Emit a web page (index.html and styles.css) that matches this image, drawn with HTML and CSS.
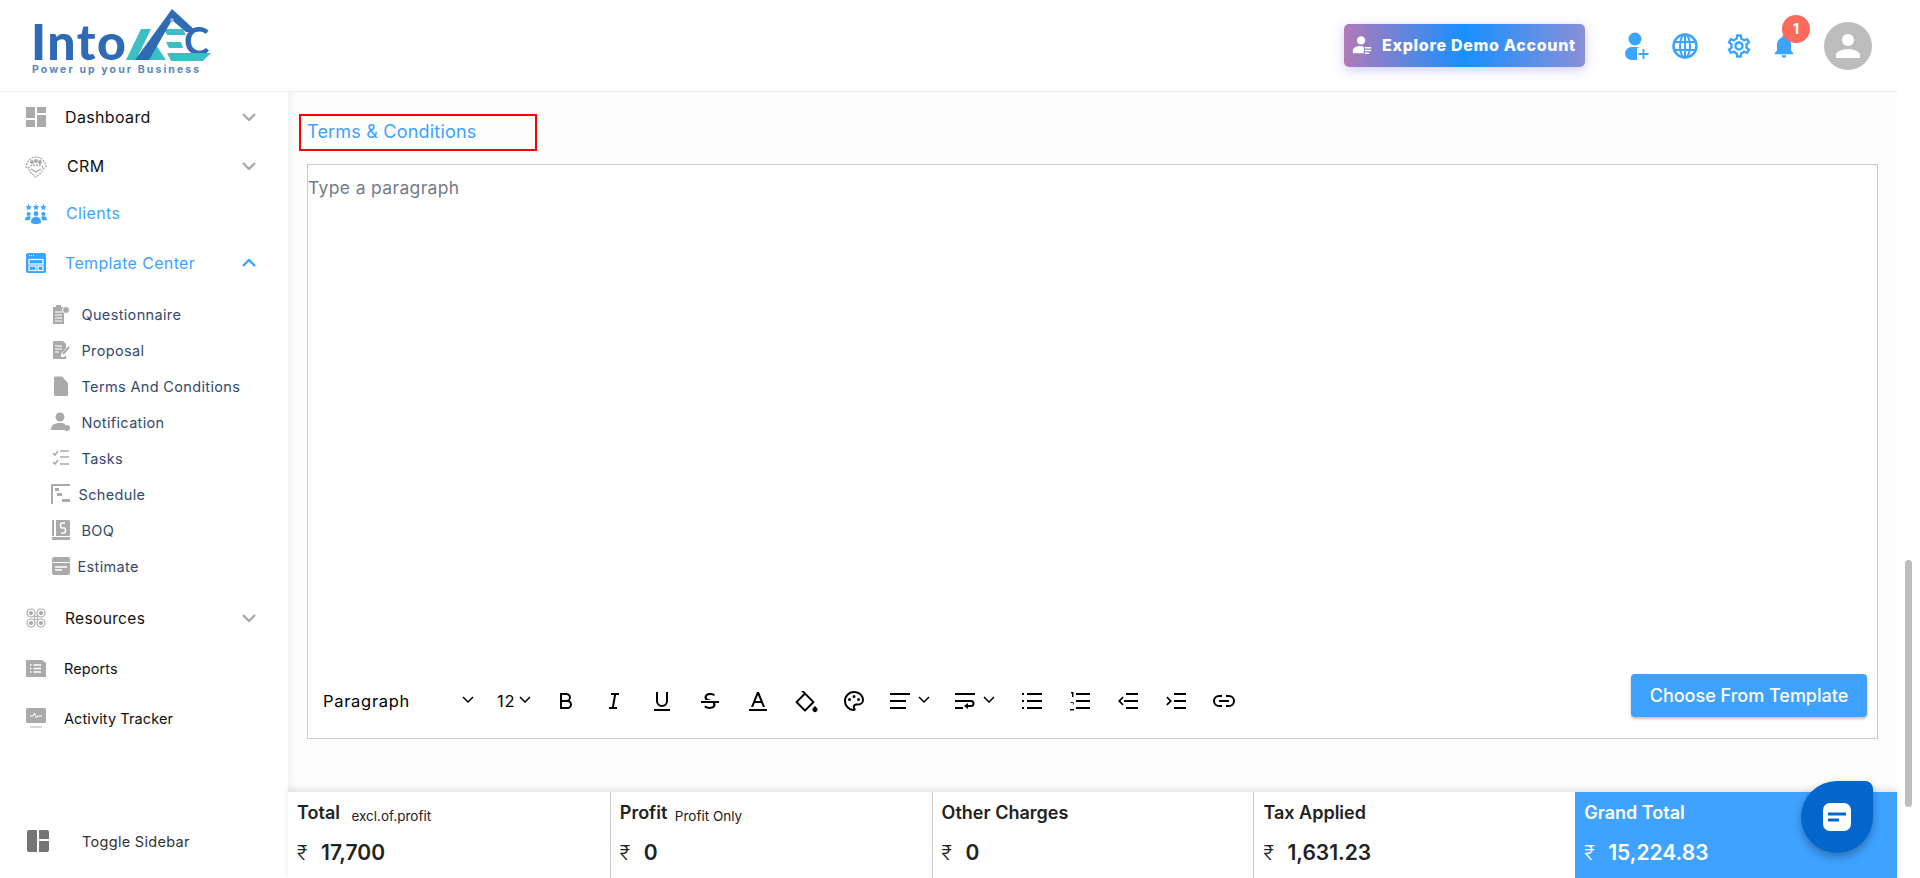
FILE: index.html
```html
<!DOCTYPE html>
<html lang="en">
<head>
    <meta charset="UTF-8">
    <meta name="viewport" content="width=device-width, initial-scale=1.0">
    <title>IntoAEC - Terms &amp; Conditions</title>
    <link rel="stylesheet" href="styles.css">
</head>
<body>
    <div class="page">
        <div class="app">
            <header class="topbar">
                <svg class="logo" viewBox="0 0 190 75" width="190" height="75">
                    <text x="6" y="55" class="logoInto">Into</text>
                    <text x="7" y="68" class="logoTag">Power up your Business</text>
                    <polygon points="101,55 116,24 126,24 111,55" fill="#3bbfc4"/>
                    <polygon points="123,55 131,40 141,55" fill="#3bbfc4"/>
                    <polygon points="139,24 158,24 161,30 142,30" fill="#3bbfc4"/>
                    <polygon points="141,37 156,37 158,43 144,43" fill="#3bbfc4"/>
                    <text x="159" y="50" class="logoC">C</text>
                    <polygon points="142,48 186,48 178,56 146,56" fill="#3bbfc4"/>
                    <polygon points="110,55 147,4 172,27 161,27 147,15 124,55" fill="#2f6ab5"/>
                    <circle cx="147" cy="15" r="2" fill="#8fb0d8"/>
                </svg>
                <div class="topActions">
                    <button class="demoBtn">
                        <svg viewBox="0 0 24 24" width="22" height="22"><circle cx="11" cy="7" r="4.5" fill="#fff"/><path d="M2 21v-3c0-3 4-5 8-5 1.5 0 3 .3 4 .8V21z" fill="#fff"/><path d="M15 15h7M15 18h7M15 21h5" stroke="#fff" stroke-width="1.5"/></svg>
                        <span>Explore Demo Account</span>
                    </button>
                    <svg class="topIcon addUser" viewBox="0 0 26 30" width="26" height="30"><circle cx="11" cy="8" r="6.5" fill="#3aa4ff"/><rect x="1" y="16" width="18" height="13" rx="6.5" fill="#3aa4ff"/><rect x="13" y="17" width="13" height="13" fill="#fff"/><path d="M19.5 18v10M14.5 23h10" stroke="#3aa4ff" stroke-width="1.8"/></svg>
                    <svg class="topIcon globe" viewBox="0 0 26 26" width="26" height="26" fill="none" stroke="#3aa4ff" stroke-width="2"><circle cx="13" cy="13" r="11.5" stroke-width="2.5"/><ellipse cx="13" cy="13" rx="5" ry="11.5"/><path d="M13 1.5v23M2.5 9h21M2.5 17h21"/></svg>
                    <svg class="topIcon gear" viewBox="0 0 24 24" width="28" height="28" fill="#3aa4ff"><path d="M19.43 12.98c.04-.32.07-.64.07-.98 0-.34-.03-.66-.07-.98l2.11-1.65c.19-.15.24-.42.12-.64l-2-3.46c-.09-.16-.26-.25-.44-.25-.06 0-.12.01-.17.03l-2.49 1c-.52-.4-1.08-.73-1.69-.98l-.38-2.65C14.46 2.18 14.25 2 14 2h-4c-.25 0-.46.18-.49.42l-.38 2.65c-.61.25-1.17.59-1.69.98l-2.49-1c-.06-.02-.12-.03-.18-.03-.17 0-.34.09-.43.25l-2 3.46c-.13.22-.07.49.12.64l2.11 1.65c-.04.32-.07.65-.07.98 0 .33.03.66.07.98l-2.11 1.65c-.19.15-.24.42-.12.64l2 3.46c.09.16.26.25.44.25.06 0 .12-.01.17-.03l2.49-1c.52.4 1.08.73 1.69.98l.38 2.65c.03.24.24.42.49.42h4c.25 0 .46-.18.49-.42l.38-2.65c.61-.25 1.17-.59 1.69-.98l2.49 1c.06.02.12.03.18.03.17 0 .34-.09.43-.25l2-3.46c.12-.22.07-.49-.12-.64l-2.11-1.65zm-1.98-1.71c.04.31.05.52.05.73 0 .21-.02.43-.05.73l-.14 1.13.89.7 1.08.84-.7 1.21-1.27-.51-1.04-.42-.9.68c-.43.32-.84.56-1.25.73l-1.06.43-.16 1.13-.2 1.35h-1.4l-.19-1.35-.16-1.13-1.06-.43c-.43-.18-.83-.41-1.23-.71l-.91-.7-1.06.43-1.27.51-.7-1.21 1.08-.84.89-.7-.14-1.13c-.03-.31-.05-.54-.05-.74s.02-.43.05-.73l.14-1.13-.89-.7-1.08-.84.7-1.21 1.27.51 1.04.42.9-.68c.43-.32.84-.56 1.25-.73l1.06-.43.16-1.13.2-1.35h1.39l.19 1.35.16 1.13 1.06.43c.43.18.83.41 1.23.71l.91.7 1.06-.43 1.27-.51.7 1.21-1.07.85-.89.7.14 1.13zM12 8c-2.21 0-4 1.79-4 4s1.79 4 4 4 4-1.79 4-4-1.79-4-4-4zm0 6c-1.1 0-2-.9-2-2s.9-2 2-2 2 .9 2 2-.9 2-2 2z"/></svg>
                    <div class="bell">
                        <svg viewBox="0 0 24 24" width="28" height="28" fill="#3aa4ff"><path d="M12 22c1.1 0 2-.9 2-2h-4c0 1.1.9 2 2 2zm6-6v-5c0-3.07-1.63-5.64-4.5-6.32V4c0-.83-.67-1.5-1.5-1.5s-1.5.67-1.5 1.5v.68C7.64 5.36 6 7.92 6 11v5l-2 2v1h16v-1l-2-2z"/></svg>
                        <span class="badge">1</span>
                    </div>
                    <div class="avatar">
                        <svg viewBox="0 0 24 24" width="36" height="36" fill="#fff"><path d="M12 12c2.21 0 4-1.79 4-4s-1.79-4-4-4-4 1.79-4 4 1.79 4 4 4zm0 2c-2.67 0-8 1.34-8 4v2h16v-2c0-2.66-5.33-4-8-4z"/></svg>
                    </div>
                </div>
            </header>

            <div class="layout">
                <aside class="sidebar">
                    <a class="navItem">
                        <svg class="navIcon" viewBox="0 0 20 20" width="20" height="20" fill="#aaa"><rect width="9" height="11"/><rect x="11" width="9" height="6"/><rect y="13" width="9" height="7"/><rect x="11" y="8" width="9" height="12"/></svg>
                        <span>Dashboard</span>
                        <svg class="chev" viewBox="0 0 14 8" width="14" height="8"><path d="M1 1l6 6 6-6"/></svg>
                    </a>
                    <a class="navItem">
                        <svg class="navIcon" viewBox="0 0 22 24" width="22" height="24" fill="none" stroke="#aaa" stroke-width="1.3"><path d="M1 14a10 11 0 0 1 20 0" stroke-dasharray="2 1"/><circle cx="7" cy="8" r="1.3" fill="#aaa"/><circle cx="11" cy="7" r="1.3" fill="#aaa"/><circle cx="15" cy="8" r="1.3" fill="#aaa"/><path d="M3 14l4-3h8l4 3-3 5-5 4-5-4z" stroke-dasharray="2 1"/><path d="M6 15l5 3 5-3"/></svg>
                        <span class="nudge2">CRM</span>
                        <svg class="chev" viewBox="0 0 14 8" width="14" height="8"><path d="M1 1l6 6 6-6"/></svg>
                    </a>
                    <a class="navItem active clientsItem">
                        <svg class="navIcon" viewBox="0 0 24 24" width="24" height="24" fill="#3aa4ff">
                            <polygon points="4,2 5,4.5 7.6,4.7 5.6,6.5 6.2,9.1 4,7.7 1.8,9.1 2.4,6.5 .4,4.7 3,4.5"/>
                            <polygon points="12,2 13,4.5 15.6,4.7 13.6,6.5 14.2,9.1 12,7.7 9.8,9.1 10.4,6.5 8.4,4.7 11,4.5"/>
                            <polygon points="20,2 21,4.5 23.6,4.7 21.6,6.5 22.2,9.1 20,7.7 17.8,9.1 18.4,6.5 16.4,4.7 19,4.5"/>
                            <path d="M12 0v1.5" stroke="#3aa4ff" stroke-width=".7"/>
                            <circle cx="4" cy="13" r="2.2"/><circle cx="12" cy="12.8" r="2.6"/><circle cx="20" cy="13" r="2.2"/>
                            <path d="M0 20c0-3 1.5-4.5 4-4.5 1 0 2 .3 2.5 1-.8 1-1.2 2-1.3 3.5zM24 20c0-3-1.5-4.5-4-4.5-1 0-2 .3-2.5 1 .8 1 1.2 2 1.3 3.5zM6.5 22.5c0-4 2-6.5 5.5-6.500s5.500 2.500 5.500 6.500c-1.500 1-3.500 1.500-5.500 1.500s-4-.5-5.500-1.500z"/>
                        </svg>
                        <span class="nudge1">Clients</span>
                    </a>
                    <a class="navItem active templateItem">
                        <svg class="navIcon" viewBox="0 0 20 20" width="20" height="20"><rect width="20" height="20" rx="2" fill="#3aa4ff"/><rect x="3" y="6.5" width="14" height="4.5" fill="none" stroke="#fff" stroke-width="1.2"/><rect x="3" y="13" width="7" height="4.5" fill="none" stroke="#fff" stroke-width="1.2"/><rect x="12" y="13" width="5" height="4.5" fill="none" stroke="#fff" stroke-width="1.2"/><path d="M3 2.5h1M5 2.5h1M7 2.5h1" stroke="#fff"/></svg>
                        <span>Template Center</span>
                        <svg class="chev chevActive" viewBox="0 0 14 8" width="14" height="8"><path d="M1 7l6-6 6 6"/></svg>
                    </a>

                    <div class="subList">
                        <a class="subItem">
                            <svg class="subIcon" viewBox="0 0 18 20" width="18" height="20" fill="#aaa"><path d="M1 3h3V1h5v2h3v17H1z"/><circle cx="14" cy="6" r="3.5" stroke="#fff"/><path d="M3 8h7M3 11h7M3 14h7M3 17h7" stroke="#fff"/></svg>
                            <span>Questionnaire</span>
                        </a>
                        <a class="subItem">
                            <svg class="subIcon" viewBox="0 0 18 20" width="18" height="20" fill="#aaa"><path d="M1 2q0-1 1-1h9l3 3v4l-5 6v3h3l2-2v4H2q-1 0-1-1z"/><path d="M3 6h7M3 9h7M3 12h4" stroke="#fff"/><path d="M17 7l-6 7" stroke="#aaa" stroke-width="2"/></svg>
                            <span>Proposal</span>
                        </a>
                        <a class="subItem">
                            <svg class="subIcon" viewBox="0 0 18 20" width="18" height="20" fill="#aaa"><path d="M2 2q0-1.5 1.5-1.5H10L16 7v11.5q0 1.5-1.5 1.5h-11Q2 20 2 18.5z"/></svg>
                            <span>Terms And Conditions</span>
                        </a>
                        <a class="subItem">
                            <svg class="subIcon" viewBox="0 0 20 20" width="20" height="20" fill="#aaa"><circle cx="9" cy="5" r="4.5"/><path d="M0 17c0-4 4-6 9-6 2 0 4 .4 5 1l1 5-2 1H0z"/><circle cx="16" cy="16" r="3"/></svg>
                            <span>Notification</span>
                        </a>
                        <a class="subItem">
                            <svg class="subIcon" viewBox="0 0 18 18" width="18" height="18" fill="none" stroke="#aaa" stroke-width="1.5"><path d="M1 4l2 2 3-4M1 13l2 2 3-4M8 2h9M8 8h9M8 15h9"/></svg>
                            <span>Tasks</span>
                        </a>
                        <a class="subItem">
                            <svg class="subIcon" viewBox="0 0 20 20" width="20" height="20" fill="#aaa"><path d="M0 0h19v2H2v18H0z"/><rect x="4" y="4" width="4" height="3"/><rect x="6" y="9" width="5" height="3"/><rect x="11" y="15" width="8" height="3"/></svg>
                            <span class="tight1">Schedule</span>
                        </a>
                        <a class="subItem">
                            <svg class="subIcon" viewBox="0 0 20 22" width="20" height="22" fill="#aaa"><path d="M1 2q0-1 1-1h1v16H1zM5 1h12q2 0 2 2v13q0 1-1 1H5z"/><path d="M1 18h18v2q0 1-1 1H2q-1 0-1-1z"/><path d="M14 4h-3q-1.5 0-1.5 2.5T11 9h2q1.5 0 1.5 2.5T13 14h-3" fill="none" stroke="#fff" stroke-width="1.6"/></svg>
                            <span>BOQ</span>
                        </a>
                        <a class="subItem">
                            <svg class="subIcon" viewBox="0 0 18 18" width="18" height="18" fill="#aaa"><path d="M0 2q0-2 2-2h14q2 0 2 2v3H0zM0 6h18v10q0 2-2 2H2q-2 0-2-2z"/><path d="M3 10h12M3 13h7" stroke="#fff" stroke-width="1.5"/></svg>
                            <span class="tight3">Estimate</span>
                        </a>
                    </div>

                    <div class="lowerNav">
                        <a class="navItem resourcesItem">
                            <svg class="navIcon" viewBox="0 0 20 20" width="20" height="20" fill="none" stroke="#aaa" stroke-width="1.2"><circle cx="5" cy="5" r="4"/><circle cx="15" cy="5" r="4"/><circle cx="5" cy="15" r="4"/><circle cx="15" cy="15" r="4"/><circle cx="10" cy="10" r="1.8"/><circle cx="5" cy="5" r="1.5" fill="#aaa"/><circle cx="15" cy="5" r="1.5" fill="#aaa"/><circle cx="5" cy="15" r="1.5" fill="#aaa"/><circle cx="15" cy="15" r="1.5" fill="#aaa"/></svg>
                            <span>Resources</span>
                            <svg class="chev" viewBox="0 0 14 8" width="14" height="8"><path d="M1 1l6 6 6-6"/></svg>
                        </a>
                        <a class="navItem smallItem">
                            <svg class="navIcon" viewBox="0 0 20 18" width="20" height="18" fill="#aaa"><path d="M0 1h16l4 3v14H0z"/><path d="M4 6h1.5M4 9.5h1.5M4 13h1.5M7.5 6H15M7.5 9.5H15M7.5 13H15" stroke="#fff" stroke-width="1.5"/></svg>
                            <span class="nudgeBack">Reports</span>
                        </a>
                        <a class="navItem smallItem">
                            <svg class="navIcon" viewBox="0 0 20 20" width="20" height="20" fill="#aaa"><rect width="20" height="15" rx="1.5"/><path d="M4 8h3l1.5-3 2 5L12 8h4" fill="none" stroke="#fff"/><path d="M4 19h12" stroke="#aaa"/></svg>
                            <span class="nudgeBack">Activity Tracker</span>
                        </a>
                    </div>

                    <a class="toggleItem">
                        <svg viewBox="0 0 22 22" width="22" height="22" fill="#757575"><path d="M2 0h8v22H2q-2 0-2-2V2q0-2 2-2zM12 0h8q2 0 2 2v7H12zM12 11h10v9q0 2-2 2h-8z"/></svg>
                        <span>Toggle Sidebar</span>
                    </a>
                </aside>

                <main class="main">
                    <div class="content">
                        <div class="titleBox">Terms &amp; Conditions</div>
                        <div class="editor">
                            <div class="editorBody">Type a paragraph</div>
                            <div class="toolbar">
                                <div class="selectPara">
                                    <span>Paragraph</span>
                                    <svg class="tbChev" viewBox="0 0 12 7" width="12" height="7"><path d="M1 1l5 5 5-5"/></svg>
                                </div>
                                <div class="selectSize">
                                    <span>12</span>
                                    <svg class="tbChev" viewBox="0 0 12 7" width="12" height="7"><path d="M1 1l5 5 5-5"/></svg>
                                </div>
                                <div class="tool"><svg viewBox="0 0 24 24" width="24" height="24"><path d="M8 11h4.5a2.5 2.5 0 0 0 0-5H8v5zm10 4.5a4.5 4.5 0 0 1-4.5 4.5H6V4h6.5a4.5 4.5 0 0 1 3.25 7.6A4.5 4.5 0 0 1 18 15.5zM8 13v5h5.5a2.5 2.5 0 0 0 0-5H8z"/></svg></div>
                                <div class="tool"><svg viewBox="0 0 24 24" width="24" height="24"><path d="M15 20H7v-2h2.927l2.116-12H9V4h8v2h-2.927l-2.116 12H15z"/></svg></div>
                                <div class="tool"><svg viewBox="0 0 24 24" width="24" height="24"><path d="M8 3v9a4 4 0 1 0 8 0V3h2v9a6 6 0 1 1-12 0V3h2zM4 20h16v2H4v-2z"/></svg></div>
                                <div class="tool"><svg viewBox="0 0 24 24" width="24" height="24"><path d="M17.154 14c.23.516.346 1.09.346 1.72 0 1.342-.524 2.392-1.571 3.147C14.88 19.622 13.433 20 11.586 20c-1.64 0-3.263-.381-4.87-1.144V16.6c1.52.877 3.075 1.316 4.666 1.316 2.551 0 3.83-.732 3.839-2.197a2.21 2.21 0 0 0-.648-1.603l-.12-.117H3v-2h18v2h-3.846zm-4.078-3H7.629a4.086 4.086 0 0 1-.481-.522C6.716 9.92 6.5 9.246 6.5 8.452c0-1.236.466-2.287 1.397-3.153C8.83 4.433 10.271 4 12.222 4c1.471 0 2.879.328 4.222.984v2.152c-1.2-.687-2.515-1.03-3.946-1.03-2.48 0-3.719.782-3.719 2.346 0 .42.218.786.654 1.099.436.313.974.562 1.613.75.62.18 1.297.414 2.03.699z"/></svg></div>
                                <div class="tool"><svg viewBox="0 0 24 24" width="24" height="24"><path d="M15.246 14H8.754l-1.6 4H5l6-15h2l6 15h-2.154l-1.6-4zm-.8-2L12 5.885 9.554 12h4.892zM3 20h18v2H3v-2z"/></svg></div>
                                <div class="tool"><svg viewBox="0 0 24 24" width="24" height="24"><path d="M19.228 18.732l1.768-1.768 1.767 1.768a2.5 2.5 0 1 1-3.535 0zM8.878 1.08l11.314 11.313a1 1 0 0 1 0 1.415l-8.485 8.485a1 1 0 0 1-1.414 0l-8.485-8.485a1 1 0 0 1 0-1.415l7.778-7.778-2.122-2.121L8.88 1.08zM11 6.03L3.929 13.1 11 20.173l7.071-7.071L11 6.03z"/></svg></div>
                                <div class="tool"><svg viewBox="0 0 24 24" width="24" height="24"><path d="M12 2c5.522 0 10 3.978 10 8.889a5.558 5.558 0 0 1-5.556 5.555h-1.966c-.922 0-1.667.745-1.667 1.667 0 .422.167.811.422 1.1.267.3.434.689.434 1.122C13.667 21.256 12.9 22 12 22 6.478 22 2 17.522 2 12S6.478 2 12 2zm-1.189 16.111a3.664 3.664 0 0 1 3.667-3.667h1.966A3.558 3.558 0 0 0 20 10.89C20 7.139 16.468 4 12 4a8 8 0 0 0-.676 15.972 3.648 3.648 0 0 1-.513-1.86zM7.5 12a1.5 1.5 0 1 1 0-3 1.5 1.5 0 0 1 0 3zm9 0a1.5 1.5 0 1 1 0-3 1.5 1.5 0 0 1 0 3zM12 9a1.5 1.5 0 1 1 0-3 1.5 1.5 0 0 1 0 3z"/></svg></div>
                                <div class="tool toolWide">
                                    <svg viewBox="0 0 24 24" width="24" height="24"><path d="M2 4h20v2H2zM2 11h16v2H2zM2 18h16v2H2z"/></svg>
                                    <svg class="tbChev" viewBox="0 0 12 7" width="12" height="7"><path d="M1 1l5 5 5-5"/></svg>
                                </div>
                                <div class="tool toolWide">
                                    <svg viewBox="0 0 24 24" width="24" height="24"><path d="M2 4h20v2H2zM2 18h8v2H2zM2 11h16a3.5 3.5 0 0 1 0 7h-3v2l-4-3 4-3v2h3a1.5 1.5 0 0 0 0-3H2z"/></svg>
                                    <svg class="tbChev" viewBox="0 0 12 7" width="12" height="7"><path d="M1 1l5 5 5-5"/></svg>
                                </div>
                                <div class="tool"><svg viewBox="0 0 24 24" width="24" height="24"><path d="M7 4h15v2H7zM7 11h15v2H7zM7 18h15v2H7zM2 4h2v2H2zM2 11h2v2H2zM2 18h2v2H2z"/></svg></div>
                                <div class="tool"><svg viewBox="0 0 24 24" width="24" height="24"><path d="M8 4h14v2H8zM8 11h14v2H8zM8 18h14v2H8zM3 3h2.5v5H4V4.5H3zM2.5 14h3.5v1.3H4.5c1.5-.8 1.5-2.3-.5-2.300-.9 0-1.500.4-1.500 1.200zM2 20h4v1.500H2z"/></svg></div>
                                <div class="tool"><svg viewBox="0 0 24 24" width="24" height="24"><path d="M10 4h12v2H10zM8 11h14v2H8zM10 18h12v2H10zM6.5 7.5L2 12l4.5 4.5 1.2-1.2L4.4 12l3.3-3.3z"/></svg></div>
                                <div class="tool"><svg viewBox="0 0 24 24" width="24" height="24"><path d="M10 4h12v2H10zM10 11h12v2H10zM10 18h12v2H10zM3.5 7.5L8 12l-4.5 4.5-1.2-1.2L5.600 12 2.300 8.700z"/></svg></div>
                                <div class="tool"><svg viewBox="0 0 24 24" width="24" height="24" fill="none" stroke="#000" stroke-width="2"><path d="M10 7H7a5 5 0 0 0 0 10h3M14 7h3a5 5 0 0 1 0 10h-3M7 12h10"/></svg></div>
                                <button class="templateBtn">Choose From Template</button>
                            </div>
                        </div>
                    </div>

                    <div class="totals">
                        <div class="totalCell">
                            <div class="cellHead">Total <small>excl.of.profit</small></div>
                            <div class="cellAmount"><span class="rupee">₹</span>17,700</div>
                        </div>
                        <div class="totalCell">
                            <div class="cellHead">Profit <small class="closer">Profit Only</small></div>
                            <div class="cellAmount"><span class="rupee">₹</span>0</div>
                        </div>
                        <div class="totalCell">
                            <div class="cellHead">Other Charges</div>
                            <div class="cellAmount"><span class="rupee">₹</span>0</div>
                        </div>
                        <div class="totalCell">
                            <div class="cellHead">Tax Applied</div>
                            <div class="cellAmount"><span class="rupee">₹</span>1,631.23</div>
                        </div>
                        <div class="totalCell grand">
                            <div class="cellHead">Grand Total</div>
                            <div class="cellAmount"><span class="rupee">₹</span>15,224.83</div>
                        </div>
                    </div>
                </main>
            </div>
        </div>
        <div class="scrollTrack"><div class="scrollThumb"></div></div>
    </div>

    <div class="chatFab">
        <svg viewBox="0 0 28 28" width="28" height="28"><rect width="28" height="28" rx="7" fill="#fff"/><path d="M5 11h18M5 17h11" stroke="#0366cc" stroke-width="3"/></svg>
    </div>
</body>
</html>
```

FILE: styles.css
```css
*{
    box-sizing: border-box;
    font-family: Inter, "Noto Sans", sans-serif;
}

html, body{
    margin:0;
    height:100%;
    overflow:hidden;
    background:#fff;
}

.page{
    display:flex;
    height:878px;
}

.app{
    width:1897px;
    display:flex;
    flex-direction:column;
}

.scrollTrack{
    flex:1;
    padding:560px 8px 0 8px;
}

.scrollThumb{
    width:7px;
    height:247px;
    background:#bdbdbd;
    border-radius:4px;
}

/* header */
.topbar{
    height:92px;
    flex:none;
    display:flex;
    align-items:center;
    justify-content:space-between;
    border-bottom:solid 1px #ececec;
    padding-left:25px;
}

.logo{
    display:block;
    margin-top:-6px;
}

.logoInto{
    font-family:Lato, sans-serif;
    font-size:50px;
    font-weight:900;
    letter-spacing:1.5px;
    fill:#2f6ab5;
}

.logoTag{
    font-size:10.5px;
    font-weight:700;
    letter-spacing:2.1px;
    fill:#5b86bf;
}

.logoC{
    font-family:Lato, sans-serif;
    font-size:38px;
    font-weight:700;
    fill:#2f6ab5;
}

.topActions{
    display:flex;
    align-items:center;
    margin-right:25px;
}

.demoBtn{
    width:241px;
    height:43px;
    display:flex;
    align-items:center;
    gap:9px;
    padding:0 0 2px 7px;
    border:none;
    border-radius:5px;
    color:#fff;
    font-size:16px;
    font-weight:800;
    letter-spacing:.7px;
    background:linear-gradient(90deg,#b07ab8 0%,#1790ff 50%,#8a8fd8 100%);
    box-shadow:0 3px 12px rgba(90,90,230,.3);
}

.addUser{
    margin-left:39px;
}

.globe{
    margin-left:22px;
}

.gear{
    margin-left:27px;
}

.bell{
    position:relative;
    width:28px;
    height:28px;
    margin-left:17px;
}

.badge{
    position:absolute;
    left:12px;
    top:-17px;
    width:28px;
    height:28px;
    border-radius:50%;
    background:#fb6a5b;
    color:#fff;
    font-size:14px;
    font-weight:700;
    display:flex;
    align-items:center;
    justify-content:center;
}

.avatar{
    width:48px;
    height:48px;
    border-radius:50%;
    background:#bdbdbd;
    margin-left:26px;
    display:flex;
    align-items:center;
    justify-content:center;
}

/* sidebar */
.layout{
    flex:1;
    display:flex;
    min-height:0;
}

.sidebar{
    width:288px;
    flex:none;
    display:flex;
    flex-direction:column;
    padding:1px 0 13px 0;
    background:#fff;
}

.navItem{
    height:48.5px;
    display:flex;
    align-items:center;
    padding:0 32px 0 25px;
    font-size:16px;
    letter-spacing:.35px;
    color:#111;
}

.clientsItem{
    height:46px;
}

.templateItem{
    height:53px;
}

.resourcesItem{
    font-size:15.5px;
}

.smallItem{
    font-size:14.5px;
    letter-spacing:.1px;
}

.navIcon{
    width:22px;
    flex:none;
    margin-right:18px;
}

.active{
    color:#3fa2ff;
}

.chev{
    margin-left:auto;
    fill:none;
    stroke:#aaa;
    stroke-width:2.4;
}

.chevActive{
    stroke:#3fa2ff;
}

.nudge2{
    margin-left:2px;
}

.nudge1{
    margin-left:1px;
}

.nudgeBack{
    margin-left:-1px;
}

.subList{
    padding-top:7px;
}

.subItem{
    height:36px;
    display:flex;
    align-items:center;
    padding-left:51px;
    font-size:14.5px;
    letter-spacing:.35px;
    color:#34496e;
}

.subIcon{
    width:20px;
    flex:none;
    margin-right:10.5px;
}

.tight1{
    margin-left:-3px;
}

.tight3{
    margin-left:-4px;
}

.lowerNav{
    margin-top:10px;
    display:flex;
    flex-direction:column;
    gap:1.5px;
}

.toggleItem{
    margin-top:auto;
    height:48px;
    display:flex;
    align-items:center;
    gap:33px;
    padding-left:27px;
    font-size:14.5px;
    letter-spacing:.3px;
    color:#333;
}

/* main */
.main{
    flex:1;
    min-width:0;
    display:flex;
    flex-direction:column;
}

.content{
    flex:1;
    background:#fdfdfd;
    box-shadow:inset 8px 0 8px -6px #eee;
    padding:22px 19px 0 11px;
}

.titleBox{
    width:238px;
    height:37px;
    border:solid 2px #f00;
    padding:0 0 2px 6px;
    display:flex;
    align-items:center;
    color:#3fa2ff;
    font-size:18px;
    font-weight:400;
    letter-spacing:.2px;
}

.editor{
    margin:13px 0 0 8px;
    height:575px;
    border:solid 1px #ccc;
    background:#fff;
    display:flex;
    flex-direction:column;
}

.editorBody{
    flex:1;
    font-size:17.5px;
    letter-spacing:.35px;
    color:#747a8a;
    padding-top:12px;
}

.toolbar{
    height:64px;
    display:flex;
    align-items:flex-start;
    padding-left:15px;
    padding-right:10px;
}

.selectPara, .selectSize{
    height:54px;
    display:flex;
    align-items:center;
    font-size:16.5px;
    letter-spacing:.7px;
    color:#000;
}

.selectPara{
    width:174px;
    justify-content:space-between;
    padding-right:23px;
}

.selectSize{
    width:45px;
    gap:4px;
}

.tbChev{
    fill:none;
    stroke:#000;
    stroke-width:1.5;
    margin-top:-4px;
}

.tool{
    width:48px;
    height:54px;
    flex:none;
    display:flex;
    align-items:center;
    justify-content:center;
}

.toolWide{
    width:65px;
    justify-content:flex-start;
    padding-left:10px;
    gap:6px;
}

.templateBtn{
    margin-left:auto;
    width:236px;
    height:43px;
    border:none;
    border-radius:4px;
    background:#3fa2ff;
    color:#fff;
    font-size:18px;
    font-weight:500;
    box-shadow:0 2px 3px rgba(0,0,0,.25);
}

/* totals */
.totals{
    height:86px;
    flex:none;
    display:grid;
    grid-template-columns:repeat(5,1fr);
    background:#fff;
    box-shadow:0 -3px 6px rgba(0,0,0,.1);
    z-index:1;
}

.totalCell{
    padding:10px 9px 0 9px;
    border-left:solid 1px #ccc;
    color:#222;
}

.totalCell:first-child{
    border-left:none;
}

.cellHead{
    height:24px;
    font-size:18px;
    font-weight:600;
}

.cellHead small{
    margin-left:7px;
    font-size:13.5px;
    font-weight:400;
    vertical-align:-2px;
}

.cellHead small.closer{
    margin-left:3px;
}

.cellAmount{
    margin-top:14px;
    font-size:21px;
    font-weight:600;
}

.rupee{
    display:inline-block;
    width:24px;
    font-size:20px;
    font-weight:300;
}

.grand{
    background:#3fa2ff;
    color:#fff;
    border-left:none;
}

.chatFab{
    position:fixed;
    left:1801px;
    top:781px;
    width:72px;
    height:72px;
    border-radius:50% 8px 50% 50%;
    background:#0366cc;
    box-shadow:0 4px 8px rgba(0,0,0,.3);
    display:flex;
    align-items:center;
    justify-content:center;
    z-index:2;
}
```
